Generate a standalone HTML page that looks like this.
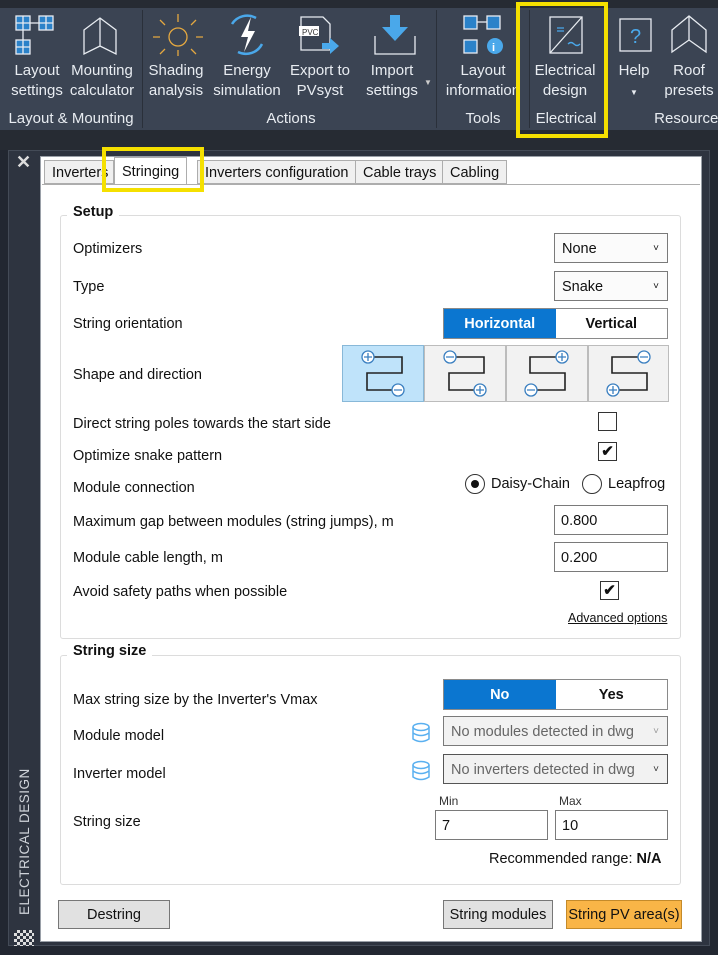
<!DOCTYPE html>
<html><head><meta charset="utf-8"><style>
*{box-sizing:border-box;margin:0;padding:0}
body{width:718px;height:955px;background:#222731;font-family:"Segoe UI","Liberation Sans",sans-serif;position:relative;overflow:hidden;font-size:14.5px;color:#111}
.a{position:absolute}
.rib{left:0;top:8px;width:718px;height:122px;background:#3b4453}
.top{left:0;top:0;width:718px;height:8px;background:#262b33}
.rl{color:#e8ecf1;font-size:15px;text-align:center;line-height:20px}
.gl{color:#e8ecf1;font-size:15px;text-align:center}
.sep{width:1px;background:#2a303a;top:10px;height:118px}
.pan{left:8px;top:150px;width:702px;height:796px;background:#2e3440;border:1px solid #444b57}
.wh{left:40px;top:156px;width:662px;height:786px;background:#fff;border:1px solid #9aa0a8}
.tab{top:160px;height:24px;border:1px solid #adadad;background:#f0f0f0;font-size:14.5px;line-height:24px;padding:0 7px}
.grp{border:1px solid #dcdcdc;border-radius:3px}
.gt{font-weight:bold;background:#fff;padding:0 6px;font-size:14.5px}
.lb{left:73px;font-size:14.5px;margin-top:2px}
.dd{border:1px solid #7a7a7a;background:#fbfbfb;height:30px;line-height:30px;padding-left:7px;font-size:14.5px}
.car{position:absolute;right:8px;top:0;font-size:10px}
.tg{height:31px;border:1px solid #8a8a8a;display:flex}
.tg div{flex:1;text-align:center;line-height:31px;font-weight:bold;font-size:14.5px}
.on{background:#0b76d0;color:#fff}
.in{border:1px solid #7a7a7a;height:30px;line-height:30px;padding-left:6px;background:#fff}
.cb{width:19px;height:19px;border:1px solid #333;background:#fff;font-size:15px;line-height:17px;text-align:center;font-weight:bold}
.btn{border:1px solid #777;background:#e1e1e1;height:29px;line-height:29px;text-align:center;font-size:14.5px}
</style></head><body>
<div class="a top"></div>
<div class="a rib"></div>
<div class="a" style="left:0;top:130px;width:718px;height:20px;background:#262b33"></div>
<svg class="a" style="left:0;top:0" width="718" height="130">
<g fill="none" stroke="#e8ecf1" stroke-width="1.3">
<rect x="16" y="16" width="14" height="14" fill="#2b82c9"/><rect x="39" y="16" width="14" height="14" fill="#2b82c9"/><line x1="30" y1="23" x2="39" y2="23"/><line x1="23" y1="30" x2="23" y2="40"/><rect x="16" y="40" width="14" height="14" fill="#2b82c9"/>
<path d="M23 16v14M16 23h14M46 16v14M39 23h14M23 40v14M16 47h14"/>
<path d="M84 30l16-12 16 12v24l-16 -8-16 8z"/><path d="M100 18v28"/>
<path d="M178 22v-8M178 56v-6M160 37h-7M203 37h-7M165 25l-5-5M191 25l5-5M165 49l-5 5M191 49l5 5" stroke="#e4a840"/><circle cx="178" cy="37" r="9" stroke="#e4a840"/>
<path d="M232 24a18 18 0 0 1 24 -6M262 44a18 18 0 0 1-24 8" stroke="#4aa8ea" stroke-width="2.5"/>
<path d="M251 17l-10 20h7l-4 15 11-21h-7z" fill="#fff" stroke="none"/>
<path d="M301 17h22l7 7v26h-29z"/><rect x="299" y="26" width="20" height="10" fill="#fff" stroke="none"/>
<text x="302" y="35" font-size="8" fill="#333" stroke="none" font-family="Liberation Sans">PVC</text>
<path d="M322 43h8v-5l9 8-9 8v-5h-8z" fill="#4aa8ea" stroke="none"/>
<path d="M375 36v18h40v-18"/><path d="M390 15h10v12h8l-13 14-13-14h8z" fill="#4aa8ea" stroke="none"/>
<rect x="464" y="16" width="13" height="13" fill="#2b82c9"/><rect x="487" y="16" width="13" height="13" fill="#2b82c9"/><rect x="464" y="40" width="13" height="13" fill="#2b82c9"/><line x1="477" y1="22" x2="487" y2="22"/>
<circle cx="495" cy="46" r="8" fill="#4aa8ea" stroke="none"/><text x="492" y="51" font-size="11" fill="#fff" stroke="none" font-weight="bold">i</text>
<rect x="550" y="17" width="32" height="36"/><path d="M550 53l32-36"/><path d="M557 28h7M557 31h7" stroke="#4aa8ea"/><path d="M568 44q3-3 6 0t6 0" stroke="#4aa8ea"/>
<rect x="620" y="19" width="31" height="32"/><text x="630" y="43" font-size="20" fill="#4aa8ea" stroke="none" font-family="Liberation Sans">?</text>
<path d="M672 30l17-14 17 14v22l-17-12-17 12z"/><path d="M689 16v24"/>
</g>
</svg>
<div class="a rl" style="left:8px;top:61px;width:58px">Layout<br>settings</div>
<div class="a rl" style="left:68px;top:61px;width:68px">Mounting<br>calculator</div>
<div class="a rl" style="left:146px;top:61px;width:60px">Shading<br>analysis</div>
<div class="a rl" style="left:210px;top:61px;width:74px">Energy<br>simulation</div>
<div class="a rl" style="left:286px;top:61px;width:68px">Export to<br>PVsyst</div>
<div class="a rl" style="left:362px;top:61px;width:60px">Import<br>settings</div>
<div class="a" style="left:424px;top:78px;color:#ccc;font-size:8px">▼</div>
<div class="a rl" style="left:440px;top:61px;width:86px;overflow:hidden;white-space:nowrap">Layout<br>information</div>
<div class="a rl" style="left:530px;top:61px;width:70px">Electrical<br>design</div>
<div class="a rl" style="left:612px;top:61px;width:44px">Help<br><span style="font-size:8px">▼</span></div>
<div class="a rl" style="left:660px;top:61px;width:58px">Roof<br>presets</div>
<div class="a gl" style="left:0;top:110px;width:142px">Layout &amp; Mounting</div>
<div class="a gl" style="left:146px;top:110px;width:290px">Actions</div>
<div class="a gl" style="left:440px;top:110px;width:86px">Tools</div>
<div class="a gl" style="left:528px;top:110px;width:76px">Electrical</div>
<div class="a gl" style="left:650px;top:110px;width:80px">Resources</div>
<div class="a sep" style="left:142px"></div><div class="a sep" style="left:436px"></div><div class="a sep" style="left:529px"></div><div class="a sep" style="left:604px"></div>
<div class="a" style="left:516px;top:2px;width:92px;height:136px;border:4px solid #f5e000"></div>
<div class="a pan"></div>
<div class="a" style="left:16px;top:152px;color:#ddd;font-size:18px;font-weight:bold">✕</div>
<div class="a" style="left:17px;top:915px;transform:rotate(-90deg);transform-origin:0 0;color:#d0d4da;font-size:13.5px;letter-spacing:.5px;white-space:nowrap">ELECTRICAL DESIGN</div>
<div class="a" style="left:14px;top:930px;width:20px;height:16px;background:repeating-conic-gradient(#ddd 0 25%,transparent 0 50%) 0 0/6px 6px"></div>
<div class="a wh"></div>
<div class="a tab" style="left:44px;width:70px;overflow:hidden">Inverters</div>
<div class="a tab" style="left:114px;top:157px;height:28px;background:#fff;border-bottom:none;line-height:28px">Stringing</div>
<div class="a tab" style="left:197px">Inverters configuration</div>
<div class="a tab" style="left:355px">Cable trays</div>
<div class="a tab" style="left:442px">Cabling</div>
<div class="a" style="left:42px;top:184px;width:658px;height:1px;background:#adadad"></div>
<div class="a" style="left:102px;top:147px;width:102px;height:45px;border:4px solid #f5e000"></div>
<div class="a grp" style="left:60px;top:215px;width:621px;height:424px"></div>
<div class="a gt" style="left:67px;top:204px">Setup</div>
<div class="a lb" style="top:239px">Optimizers</div>
<div class="a dd" style="left:554px;top:233px;width:114px">None<span class="car">˅</span></div>
<div class="a lb" style="top:277px">Type</div>
<div class="a dd" style="left:554px;top:271px;width:114px">Snake<span class="car">˅</span></div>
<div class="a lb" style="top:314px">String orientation</div>
<div class="a tg" style="left:443px;top:308px;width:225px"><div class="on">Horizontal</div><div>Vertical</div></div>
<div class="a lb" style="top:365px">Shape and direction</div>
<svg class="a" style="left:342px;top:345px" width="327" height="58">
<g stroke="#bcbcbc"><rect x="0.5" y="0.5" width="81" height="56" fill="#bfe3fa" stroke="#88b8d8"/><rect x="82.5" y="0.5" width="81" height="56" fill="#f2f2f2"/><rect x="164.5" y="0.5" width="81" height="56" fill="#f2f2f2"/><rect x="246.5" y="0.5" width="80" height="56" fill="#f2f2f2"/></g>
<g fill="none" stroke="#222" stroke-width="1.6">
<path d="M32 12h28v16h-35v17h25"/><path d="M114 12h28v16h-35v17h25"/><path d="M218 12h-30v16h35v17h-30"/><path d="M300 12h-30v16h35v17h-30"/></g>
<g fill="#fff" stroke="#3a7fc0" stroke-width="1.3"><circle cx="26" cy="12" r="6"/><circle cx="56" cy="45" r="6"/><circle cx="108" cy="12" r="6"/><circle cx="138" cy="45" r="6"/><circle cx="220" cy="12" r="6"/><circle cx="189" cy="45" r="6"/><circle cx="302" cy="12" r="6"/><circle cx="271" cy="45" r="6"/></g>
<g stroke="#3a7fc0" stroke-width="1.3"><path d="M22 12h8M26 8v8M52 45h8"/><path d="M104 12h8M134 45h8M138 41v8"/><path d="M216 12h8M220 8v8M185 45h8"/><path d="M298 12h8M267 45h8M271 41v8"/></g>
</svg>
<div class="a lb" style="top:414px">Direct string poles towards the start side</div>
<div class="a cb" style="left:598px;top:412px"></div>
<div class="a lb" style="top:446px">Optimize snake pattern</div>
<div class="a cb" style="left:598px;top:442px">✔</div>
<div class="a lb" style="top:478px">Module connection</div>
<div class="a" style="left:465px;top:474px;width:20px;height:20px;border:1px solid #333;border-radius:50%;background:#fff"><div style="margin:5px;width:8px;height:8px;border-radius:50%;background:#111"></div></div>
<div class="a" style="left:491px;top:476px">Daisy-Chain</div>
<div class="a" style="left:582px;top:474px;width:20px;height:20px;border:1px solid #333;border-radius:50%"></div>
<div class="a" style="left:608px;top:476px">Leapfrog</div>
<div class="a lb" style="top:512px">Maximum gap between modules (string jumps), m</div>
<div class="a in" style="left:554px;top:505px;width:114px">0.800</div>
<div class="a lb" style="top:548px">Module cable length, m</div>
<div class="a in" style="left:554px;top:542px;width:114px">0.200</div>
<div class="a lb" style="top:582px">Avoid safety paths when possible</div>
<div class="a cb" style="left:600px;top:581px">✔</div>
<div class="a" style="left:568px;top:611px;font-size:12.5px;text-decoration:underline;color:#111">Advanced options</div>
<div class="a grp" style="left:60px;top:655px;width:621px;height:230px"></div>
<div class="a gt" style="left:67px;top:643px">String size</div>
<div class="a lb" style="top:690px">Max string size by the Inverter's Vmax</div>
<div class="a tg" style="left:443px;top:679px;width:225px"><div class="on">No</div><div>Yes</div></div>
<div class="a lb" style="top:726px">Module model</div>
<div class="a lb" style="top:764px">Inverter model</div>
<svg class="a" style="left:411px;top:722px" width="20" height="60"><g fill="none" stroke="#5ab0f0" stroke-width="1.5"><ellipse cx="10" cy="5" rx="8" ry="3.5"/><path d="M2 5v12q8 5 16 0v-12M2 11q8 5 16 0"/><ellipse cx="10" cy="43" rx="8" ry="3.5"/><path d="M2 43v12q8 5 16 0v-12M2 49q8 5 16 0"/></g></svg>
<div class="a dd" style="left:443px;top:716px;width:225px;background:#f2f2f2;color:#666;overflow:hidden;white-space:nowrap">No modules detected in dwg<span class="car" style="background:#f2f2f2;color:#999;padding-left:4px">˅</span></div>
<div class="a dd" style="left:443px;top:754px;width:225px;background:#f2f2f2;color:#666;border-color:#555;overflow:hidden;white-space:nowrap">No inverters detected in dwg<span class="car" style="background:#f2f2f2;color:#333;padding-left:4px">˅</span></div>
<div class="a" style="left:439px;top:794px;font-size:12px;color:#333">Min</div>
<div class="a" style="left:559px;top:794px;font-size:12px;color:#333">Max</div>
<div class="a lb" style="top:812px">String size</div>
<div class="a in" style="left:435px;top:810px;width:113px">7</div>
<div class="a in" style="left:555px;top:810px;width:113px">10</div>
<div class="a" style="left:489px;top:851px">Recommended range: <b>N/A</b></div>
<div class="a btn" style="left:58px;top:900px;width:112px">Destring</div>
<div class="a btn" style="left:443px;top:900px;width:110px">String modules</div>
<div class="a btn" style="left:566px;top:900px;width:116px;background:#f9b547;border-color:#c48a2a">String PV area(s)</div>
</body></html>
